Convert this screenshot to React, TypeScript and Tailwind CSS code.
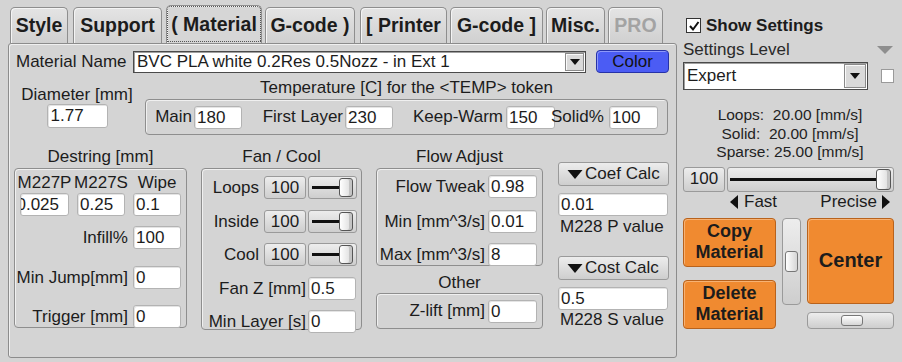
import React from "react";

// shared looks
const inputCls =
  "h-[23px] bg-white border border-[#b3b3b3] rounded-[3px] shadow-[inset_1px_1px_0_#e4e4e4] pl-[2px] leading-[21px] whitespace-nowrap overflow-hidden";
const btnCls =
  "bg-gradient-to-b from-[#ededed] to-[#cecece] border border-[#9a9a9a] rounded-[3px]";
const groupCls =
  "border border-[#8e8e8e] rounded-[4px] shadow-[inset_1px_1px_0_#f0f0f0]";
const orangeCls =
  "bg-[#f08a30] border border-[#b8621c] rounded-[4px] shadow-[inset_1px_1px_0_#f7b273] font-bold text-[18px] leading-[21px] text-center flex items-center justify-center";

const tabs = [
  { label: "Style", cls: "w-[58px]" },
  { label: "Support", cls: "w-[89px] ml-[5px]" },
  { label: "( Material", cls: "w-[96px] ml-[4px]", active: true },
  { label: "G-code )", cls: "w-[90px] ml-[3px]" },
  { label: "[ Printer", cls: "w-[87px] ml-[5px]" },
  { label: "G-code ]", cls: "w-[93px] ml-[3px]" },
  { label: "Misc.", cls: "w-[59px] ml-[3px]" },
  { label: "PRO", cls: "w-[55px] ml-[3px]", disabled: true },
];

function Down({ className }: { className?: string }) {
  return (
    <svg className={className} viewBox="0 0 10 6">
      <polygon points="0,0 10,0 5,6" fill="#111" />
    </svg>
  );
}

function Field({ value, className = "" }: { value: string; className?: string }) {
  return <div className={`${inputCls} ${className}`}>{value}</div>;
}

function MiniSlider() {
  return (
    <div
      className={`${btnCls} w-[49px] h-[23px] ml-[2px] flex items-center pl-[3px] pr-[3px]`}
    >
      <div className="flex-1 h-[3px] bg-[#111]" />
      <div className="w-[14px] h-[19px] rounded-[3px] border border-[#555] bg-gradient-to-r from-[#ffffff] to-[#dadada] shadow-[inset_-3px_0_0_#c4c4c4]" />
    </div>
  );
}

function FanRow({ label, className }: { label: string; className: string }) {
  return (
    <div className={`flex items-center justify-end pr-[4px] ${className}`}>
      <span className="mr-[5px] whitespace-nowrap">{label}</span>
      <div className={`${btnCls} w-[42px] h-[23px] flex items-center justify-center`}>
        100
      </div>
      <MiniSlider />
    </div>
  );
}

function Select({
  value,
  className,
  arrowCls,
}: {
  value: string;
  className: string;
  arrowCls: string;
}) {
  return (
    <div
      className={`bg-white border border-[#4a4a4a] shadow-[inset_1px_1px_0_#a0a0a0] flex items-center ${className}`}
    >
      <span className="flex-1 pl-[3px] whitespace-nowrap overflow-hidden">{value}</span>
      <div
        className={`bg-[#dadada] border border-[#8a8a8a] shadow-[inset_1px_1px_0_#fafafa] flex items-center justify-center ${arrowCls}`}
      >
        <Down className="w-[10px] h-[6px]" />
      </div>
    </div>
  );
}

export default function App() {
  return (
    <div className="w-[902px] h-[362px] bg-[#d4d4d4] flex overflow-hidden text-[17px] text-[#1c1c1c] font-['Liberation_Sans',Arial,sans-serif]">
      {/* left: tabs + material panel */}
      <div className="w-[678px] pl-[8px] flex flex-col">
        <div className="h-[43px] pl-[2px] flex items-end">
          {tabs.map((t) => (
            <div
              key={t.label}
              className={`${t.cls} ${
                t.active
                  ? "h-[38px] bg-[#d6d6d6] outline outline-1 outline-dotted outline-[#555] outline-offset-[-2px]"
                  : "h-[36px] bg-gradient-to-b from-[#e4e4e4] to-[#d0d0d0]"
              } border border-b-0 border-[#8e8e8e] rounded-t-[5px] shadow-[inset_1px_1px_0_#f4f4f4] flex items-center justify-center font-bold text-[19.5px] whitespace-nowrap ${
                t.disabled ? "text-[#a3a3a3]" : ""
              }`}
            >
              {t.label}
            </div>
          ))}
        </div>

        <div className="w-[669px] h-[315px] border border-[#8c8c8c] rounded-[3px] shadow-[inset_1px_1px_0_#f0f0f0] flex flex-col">
          {/* material name */}
          <div className="mt-[6px] h-[23px] flex items-center">
            <span className="ml-[7px] w-[117px] whitespace-nowrap">Material Name</span>
            <Select
              value="BVC PLA white 0.2Res 0.5Nozz - in Ext 1"
              className="w-[453px] h-[22px]"
              arrowCls="w-[19px] h-[18px] mr-[1px]"
            />
            <div className="ml-[10px] w-[73px] h-[23px] bg-[#4b5cf4] border border-[#2632a8] rounded-[4px] shadow-[inset_1px_1px_0_#8d98fa] flex items-center justify-center text-[#111]">
              Color
            </div>
          </div>

          {/* diameter + temperature */}
          <div className="mt-[5px] flex">
            <div className="ml-[5px] w-[126px] flex flex-col items-center">
              <span className="mt-[8px] leading-[18px] whitespace-nowrap">Diameter [mm]</span>
              <Field value="1.77" className="w-[61px] h-[24px] pl-[3px]" />
            </div>
            <div className="ml-[5px] w-[523px] flex flex-col">
              <div className="mt-[1px] leading-[18px] text-center whitespace-nowrap">
                Temperature [C] for the &lt;TEMP&gt; token
              </div>
              <div className={`${groupCls} mt-[2px] h-[36px] flex items-center`}>
                <span className="w-[48px] text-right pr-[2px]">Main</span>
                <Field value="180" className="w-[48px]" />
                <span className="w-[103px] text-right pr-[2px] whitespace-nowrap">First Layer</span>
                <Field value="230" className="w-[48px]" />
                <span className="w-[113px] text-right pr-[3px] whitespace-nowrap">Keep-Warm</span>
                <Field value="150" className="w-[49px]" />
                <span className="w-[58px] ml-[-4px] whitespace-nowrap relative">Solid%</span>
                <Field value="100" className="w-[49px]" />
              </div>
            </div>
          </div>

          {/* lower groups */}
          <div className="mt-[13px] flex items-start">
            {/* destring */}
            <div className="ml-[5px] w-[173px] flex flex-col">
              <div className="leading-[18px] text-center whitespace-nowrap">Destring [mm]</div>
              <div className={`${groupCls} mt-[2px] h-[160px] flex flex-col`}>
                <div className="mt-[5px] h-[18px] leading-[18px] pl-[5px] flex">
                  <div className="w-[49px] flex justify-center whitespace-nowrap">M227P</div>
                  <div className="w-[48px] ml-[8px] flex justify-center whitespace-nowrap">M227S</div>
                  <div className="w-[48px] ml-[8px] flex justify-center whitespace-nowrap">Wipe</div>
                </div>
                <div className="mt-[1px] pl-[5px] flex">
                  <div className={`${inputCls} w-[49px] flex justify-end pr-[9px]`}>
                    <span>0.025</span>
                  </div>
                  <Field value="0.25" className="w-[48px] ml-[8px]" />
                  <Field value="0.1" className="w-[48px] ml-[8px]" />
                </div>
                <div className="mt-[9px] flex items-center justify-end pr-[5px]">
                  <span className="mr-[5px]">Infill%</span>
                  <Field value="100" className="w-[48px]" />
                </div>
                <div className="mt-[14px] flex items-center justify-end pr-[5px]">
                  <span className="mr-[5px] whitespace-nowrap">Min Jump[mm]</span>
                  <Field value="0" className="w-[48px]" />
                </div>
                <div className="mt-[14px] flex items-center justify-end pr-[5px]">
                  <span className="mr-[5px] whitespace-nowrap">Trigger [mm]</span>
                  <Field value="0" className="w-[48px]" />
                </div>
              </div>
            </div>

            {/* fan / cool */}
            <div className="ml-[14px] w-[161px] flex flex-col">
              <div className="leading-[18px] text-center whitespace-nowrap">Fan / Cool</div>
              <div className={`${groupCls} mt-[2px] h-[162px] flex flex-col`}>
                <FanRow label="Loops" className="mt-[6px]" />
                <FanRow label="Inside" className="mt-[8px]" />
                <FanRow label="Cool" className="mt-[8px]" />
                <div className="mt-[8px] flex items-center justify-end pr-[5px]">
                  <span className="mr-[2px] whitespace-nowrap">Fan Z [mm]</span>
                  <Field value="0.5" className="w-[48px]" />
                </div>
                <div className="mt-[8px] flex items-center justify-end pr-[5px]">
                  <span className="mr-[2px] whitespace-nowrap">Min Layer [s]</span>
                  <Field value="0" className="w-[48px]" />
                </div>
              </div>
            </div>

            {/* flow adjust + other */}
            <div className="ml-[14px] w-[167px] flex flex-col">
              <div className="leading-[18px] text-center whitespace-nowrap">Flow Adjust</div>
              <div className={`${groupCls} mt-[2px] h-[98px] flex flex-col`}>
                <div className="mt-[5px] flex items-center justify-end pr-[5px]">
                  <span className="mr-[3px] whitespace-nowrap">Flow Tweak</span>
                  <Field value="0.98" className="w-[49px]" />
                </div>
                <div className="mt-[9px] flex items-center justify-end pr-[5px]">
                  <span className="mr-[3px] whitespace-nowrap">Min [mm^3/s]</span>
                  <Field value="0.01" className="w-[49px]" />
                </div>
                <div className="mt-[8px] flex items-center justify-end pr-[5px]">
                  <span className="mr-[3px] whitespace-nowrap">Max [mm^3/s]</span>
                  <Field value="8" className="w-[49px]" />
                </div>
              </div>
              <div className="mt-[8px] leading-[18px] text-center">Other</div>
              <div className={`${groupCls} mt-[1px] h-[36px] flex items-center justify-end pr-[5px]`}>
                <span className="mr-[3px] whitespace-nowrap">Z-lift [mm]</span>
                <Field value="0" className="w-[49px]" />
              </div>
            </div>

            {/* calculators */}
            <div className="ml-[15px] w-[111px] flex flex-col">
              <div className={`${btnCls} mt-[14px] h-[24px] flex items-center pl-[8px] whitespace-nowrap`}>
                <Down className="w-[16px] h-[9px] mr-[2px]" />
                Coef Calc
              </div>
              <Field value="0.01" className="mt-[7px] w-[110px]" />
              <div className="mt-[2px] leading-[18px] pl-[2px] whitespace-nowrap">M228 P value</div>
              <div className={`${btnCls} mt-[20px] h-[24px] flex items-center pl-[8px] whitespace-nowrap`}>
                <Down className="w-[16px] h-[9px] mr-[2px]" />
                Cost Calc
              </div>
              <Field value="0.5" className="mt-[7px] w-[110px]" />
              <div className="mt-[1px] leading-[18px] pl-[2px] whitespace-nowrap">M228 S value</div>
            </div>
          </div>
        </div>
      </div>

      {/* right: settings column */}
      <div className="w-[224px] flex flex-col">
        <div className="mt-[18px] pl-[8px] h-[15px] flex items-center">
          <div className="w-[15px] h-[15px] bg-white border border-[#333] flex items-center justify-center">
            <svg viewBox="0 0 12 12" className="w-[12px] h-[12px]">
              <path d="M2 6 L5 9.5 L10.5 2" fill="none" stroke="#111" strokeWidth="2" />
            </svg>
          </div>
          <span className="ml-[5px] font-bold whitespace-nowrap">Show Settings</span>
        </div>
        <div className="mt-[8px] pl-[5px] pr-[9px] h-[18px] flex items-center justify-between">
          <span className="leading-[18px] text-[#2a2a2a]">Settings Level</span>
          <svg viewBox="0 0 16 8" className="w-[16px] h-[8px]">
            <polygon points="0,0 16,0 8,8" fill="#8e8e8e" />
          </svg>
        </div>
        <div className="mt-[3px] pl-[5px] flex items-center">
          <Select
            value="Expert"
            className="w-[185px] h-[28px]"
            arrowCls="w-[22px] h-[24px] mr-[1px]"
          />
          <div className="ml-[13px] w-[13px] h-[14px] bg-white border border-[#9a9a9a]" />
        </div>
        <div className="mt-[16px] text-[15.5px] leading-[18.5px] text-center text-[#222]">
          <div>Loops:&nbsp; 20.00 [mm/s]</div>
          <div>Solid:&nbsp; 20.00 [mm/s]</div>
          <div>Sparse: 25.00 [mm/s]</div>
        </div>
        <div className="mt-[5px] pl-[5px] flex items-center">
          <div className={`${btnCls} w-[42px] h-[25px] flex items-center justify-center`}>100</div>
          <div className={`${btnCls} ml-[2px] w-[167px] h-[25px] flex items-center pl-[2px] pr-[2px]`}>
            <div className="flex-1 h-[3px] bg-[#111]" />
            <div className="w-[15px] h-[21px] rounded-[3px] border border-[#555] bg-gradient-to-r from-[#ffffff] to-[#dadada] shadow-[inset_-3px_0_0_#c4c4c4]" />
          </div>
        </div>
        <div className="mt-[1px] h-[18px] pl-[52px] pr-[12px] flex items-center justify-between">
          <div className="flex items-center">
            <svg viewBox="0 0 8 14" className="w-[8px] h-[14px]">
              <polygon points="8,0 8,14 0,7" fill="#111" />
            </svg>
            <span className="ml-[6px]">Fast</span>
          </div>
          <div className="flex items-center">
            <span className="mr-[5px]">Precise</span>
            <svg viewBox="0 0 8 14" className="w-[8px] h-[14px]">
              <polygon points="0,0 0,14 8,7" fill="#111" />
            </svg>
          </div>
        </div>
        <div className="mt-[7px] pl-[5px] flex items-start">
          <div className="w-[93px] flex flex-col">
            <div className={`${orangeCls} h-[49px]`}>
              Copy
              <br />
              Material
            </div>
            <div className={`${orangeCls} mt-[13px] h-[49px]`}>
              Delete
              <br />
              Material
            </div>
          </div>
          <div className={`${btnCls} ml-[6px] w-[19px] h-[87px] rounded-[4px] flex items-center justify-center`}>
            <div className="w-[13px] h-[21px] rounded-[3px] border border-[#777] bg-gradient-to-r from-[#ffffff] to-[#d6d6d6]" />
          </div>
          <div className="ml-[6px] w-[87px] flex flex-col">
            <div className={`${orangeCls} h-[86px] text-[20px]`}>Center</div>
            <div className={`${btnCls} mt-[8px] h-[17px] rounded-[4px] flex items-center justify-center`}>
              <div className="ml-[3px] w-[22px] h-[11px] rounded-[3px] border border-[#777] bg-gradient-to-b from-[#ffffff] to-[#d6d6d6]" />
            </div>
          </div>
        </div>
      </div>
    </div>
  );
}
